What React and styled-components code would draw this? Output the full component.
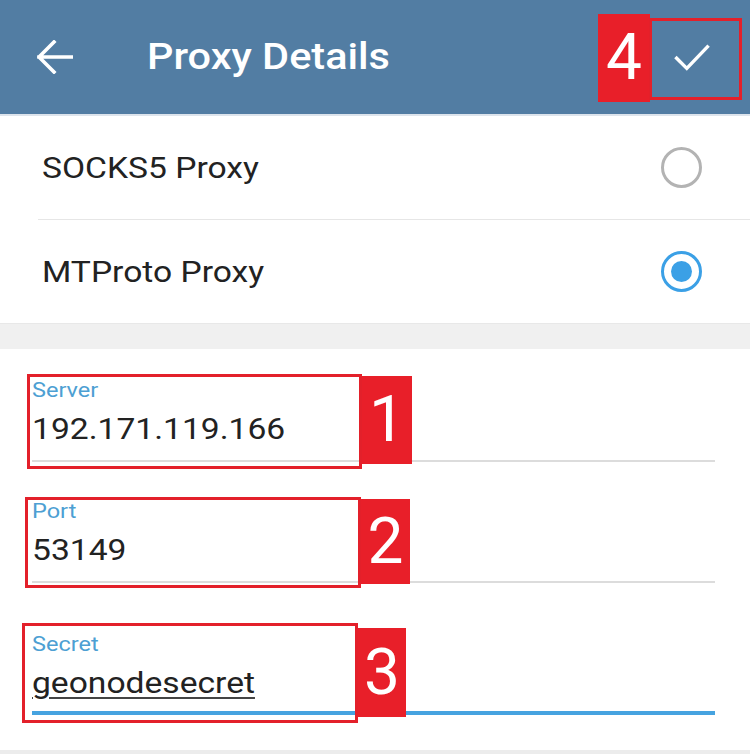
import React from "react";
import styled, { createGlobalStyle, css } from "styled-components";

const Global = createGlobalStyle`
  html, body { margin: 0; padding: 0; background: #ffffff; }
  body { font-family: Roboto, "Noto Sans", Arial, sans-serif; }
`;

/* the source screenshot's type is slightly wider than stock Roboto */
const wideType = css`
  font-family: Roboto, "Noto Sans", sans-serif;
  transform: scaleX(1.12);
  transform-origin: left center;
`;

const Screen = styled.div`
  width: 750px;
  height: 754px;
  overflow: hidden;
  display: flex;
  flex-direction: column;
  background: #ffffff;
`;

const Header = styled.header`
  position: relative;
  height: 114px;
  flex: none;
  background: #527da3;
  display: flex;
  align-items: center;
  box-shadow: 0 2px 0 #dde4ec;
  z-index: 1;
`;

const IconButton = styled.div`
  width: 36px;
  height: 36px;
  display: flex;
  align-items: center;
  justify-content: center;
  margin-left: ${(p) => p.$ml || 0}px;
  margin-right: ${(p) => p.$mr || 0}px;
`;

const Title = styled.h1`
  ${wideType};
  margin: 0 0 0 74px;
  flex: 1;
  color: #ffffff;
  font-weight: 500;
  font-size: 37px;
  line-height: 40px;
`;

const OptionList = styled.section`
  margin-top: 2px;
  background: #ffffff;
  display: flex;
  flex-direction: column;
`;

const OptionRow = styled.div`
  height: 103px;
  display: flex;
  align-items: center;
  justify-content: space-between;
  padding: 0 48px 0 42px;
  border-top: ${(p) => (p.$divided ? "1px solid #e6e6e6" : "none")};
  margin-left: ${(p) => (p.$divided ? "38px" : "0")};
  padding-left: ${(p) => (p.$divided ? "4px" : "42px")};
`;

const OptionLabel = styled.span`
  ${wideType};
  display: inline-block;
  font-size: 30px;
  color: #222222;
`;

const Radio = styled.span`
  width: 41px;
  height: 41px;
  box-sizing: border-box;
  border-radius: 50%;
  border: 3.5px solid ${(p) => (p.$checked ? "#3ba0e6" : "#b3b3b3")};
  display: flex;
  align-items: center;
  justify-content: center;
  &::after {
    content: "";
    width: 21px;
    height: 21px;
    border-radius: 50%;
    background: ${(p) => (p.$checked ? "#3ba0e6" : "transparent")};
  }
`;

const Spacer = styled.div`
  height: 25px;
  flex: none;
  background: #f0f0f0;
  border-top: 1px solid #e8e8e8;
`;

const Form = styled.section`
  flex: 1;
  background: #ffffff;
  padding: 29px 35px 0 32px;
  display: flex;
  flex-direction: column;
`;

const Field = styled.div`
  position: relative;
  margin-top: ${(p) => p.$mt || 0}px;
  display: flex;
  flex-direction: column;
`;

const FieldLabel = styled.label`
  ${wideType};
  font-size: 21px;
  line-height: 24px;
  color: #4d9fd3;
`;

const FieldValue = styled.div`
  ${wideType};
  margin-top: 9px;
  font-size: 30px;
  line-height: 36px;
  color: #222222;
  text-decoration: ${(p) => (p.$composing ? "underline" : "none")};
  text-decoration-thickness: 2px;
  text-underline-offset: 4px;
  text-decoration-color: #444;
  width: max-content;
`;

const Underline = styled.div`
  margin-top: ${(p) => (p.$active ? 10 : 13)}px;
  height: ${(p) => (p.$active ? 4 : 2)}px;
  background: ${(p) => (p.$active ? "#46a3e0" : "#dcdcdc")};
`;

const Footer = styled.div`
  height: 4px;
  flex: none;
  background: #ececec;
`;

const Outline = styled.div`
  position: absolute;
  left: ${(p) => p.$x}px;
  top: ${(p) => p.$y}px;
  width: ${(p) => p.$w}px;
  height: ${(p) => p.$h}px;
  box-sizing: border-box;
  border: 3px solid #e3202a;
  pointer-events: none;
`;

const Badge = styled.div`
  position: absolute;
  left: ${(p) => p.$x}px;
  top: ${(p) => p.$y}px;
  width: ${(p) => p.$w}px;
  height: ${(p) => p.$h}px;
  background: #e81f29;
  color: #ffffff;
  display: flex;
  align-items: center;
  justify-content: center;
  font-family: Roboto, sans-serif;
  font-size: 64px;
  line-height: 1;
`;

const BackArrow = () => (
  <svg width="36" height="34" viewBox="0 0 36 34" fill="none">
    <path
      d="M35 17H2M17 2L2 17L17 32"
      stroke="#ffffff"
      strokeWidth="3.6"
      strokeLinecap="square"
      strokeLinejoin="miter"
    />
  </svg>
);

const Check = () => (
  <svg width="38" height="28" viewBox="0 0 38 28" fill="none">
    <path d="M1.5 14L13.5 26L36.5 2" stroke="#ffffff" strokeWidth="3.6" />
  </svg>
);

export default function App() {
  return (
    <>
      <Global />
      <Screen>
        <Header>
          <IconButton $ml={37}>
            <BackArrow />
          </IconButton>
          <Title>Proxy Details</Title>
          <IconButton $mr={40}>
            <Check />
          </IconButton>
          <Badge $x={598} $y={14} $w={52} $h={88}>4</Badge>
          <Outline $x={649} $y={18} $w={93} $h={82} />
        </Header>

        <OptionList>
          <OptionRow>
            <OptionLabel>SOCKS5 Proxy</OptionLabel>
            <Radio />
          </OptionRow>
          <OptionRow $divided>
            <OptionLabel>MTProto Proxy</OptionLabel>
            <Radio $checked />
          </OptionRow>
        </OptionList>

        <Spacer />

        <Form>
          <Field>
            <FieldLabel>Server</FieldLabel>
            <FieldValue>192.171.119.166</FieldValue>
            <Underline />
            <Outline $x={-5} $y={-4} $w={335} $h={95} />
            <Badge $x={330} $y={-2} $w={50} $h={88}>1</Badge>
          </Field>
          <Field $mt={37}>
            <FieldLabel>Port</FieldLabel>
            <FieldValue>53149</FieldValue>
            <Underline />
            <Outline $x={-7} $y={-2} $w={336} $h={91} />
            <Badge $x={329} $y={0} $w={49} $h={85}>2</Badge>
          </Field>
          <Field $mt={49}>
            <FieldLabel>Secret</FieldLabel>
            <FieldValue $composing>geonodesecret</FieldValue>
            <Underline $active />
            <Outline $x={-10} $y={-9} $w={336} $h={100} />
            <Badge $x={326} $y={-4} $w={48} $h={89}>3</Badge>
          </Field>
        </Form>
        <Footer />
      </Screen>
    </>
  );
}
